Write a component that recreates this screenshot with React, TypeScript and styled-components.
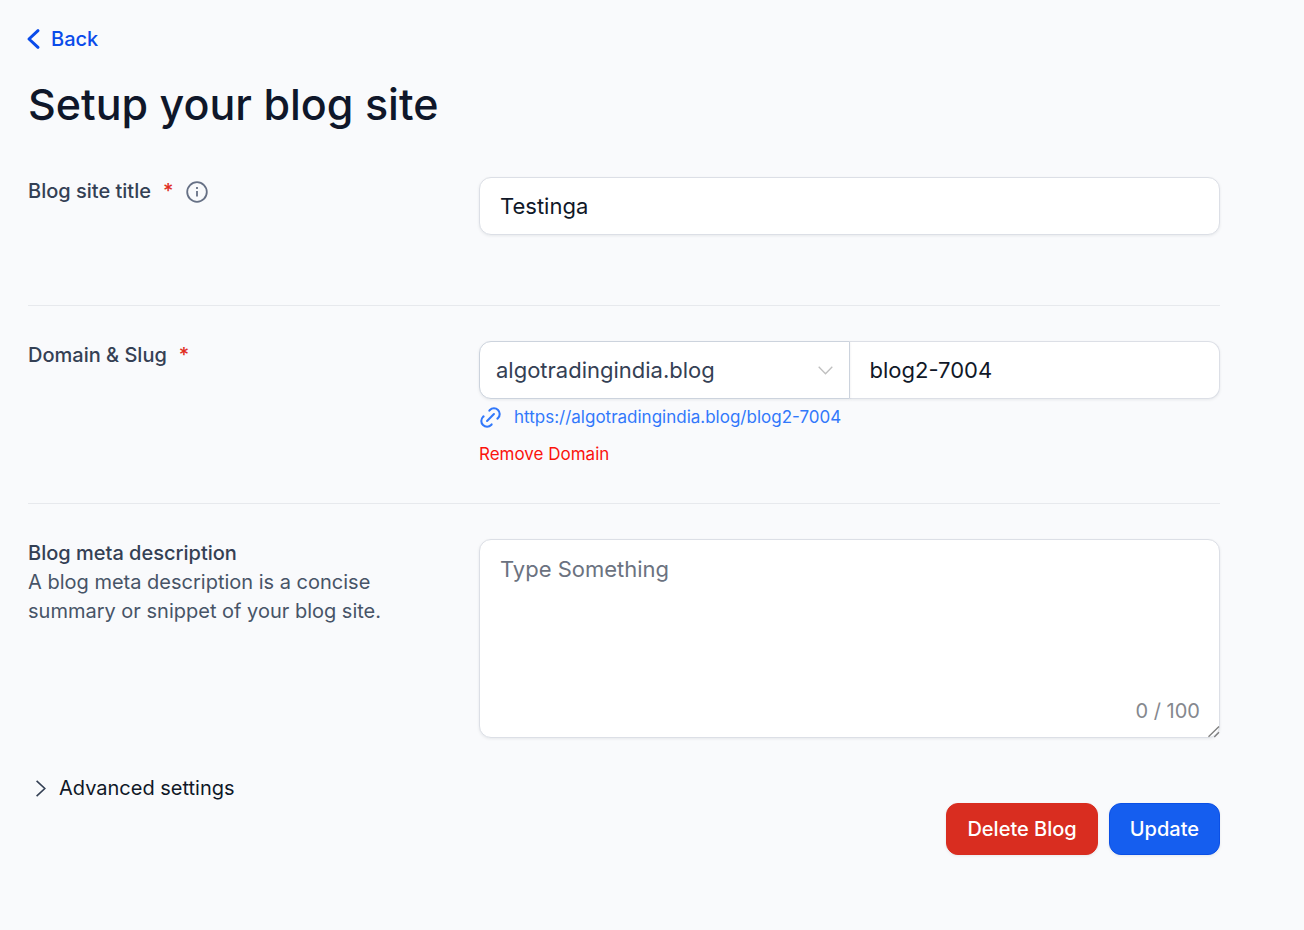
import { useId, useState } from "react";
import styled, { createGlobalStyle, css } from "styled-components";

const GlobalStyle = createGlobalStyle`
  *, *::before, *::after { box-sizing: border-box; }
  body {
    margin: 0;
    background: #f9fafc;
    color: #101828;
    font-family: Inter, "Liberation Sans", sans-serif;
    font-size: 20px;
    line-height: 29px;
  }
  button, input, select, textarea { font: inherit; color: inherit; }
`;

const Page = styled.main`
  padding: 24px 84px 72px 28px;
`;

const BackLink = styled.a`
  display: flex;
  width: fit-content;
  align-items: center;
  gap: 11px;
  height: 30px;
  color: #0a4bea;
  font-weight: 500;
  text-decoration: none;
  svg { overflow: visible; }
`;

const Title = styled.h1`
  margin: 22px 0 45px;
  font-size: 43px;
  line-height: 56px;
  font-weight: 500;
  color: #0f172a;
`;

const Row = styled.section<{ $last?: boolean; $roomy?: boolean }>`
  display: grid;
  grid-template-columns: minmax(0, 416px) minmax(0, 1fr);
  column-gap: 35px;
  padding-bottom: ${(p) => (p.$roomy ? 70 : 34)}px;
  ${(p) =>
    !p.$last &&
    css`
      border-bottom: 1px solid #e7e9ed;
      margin-bottom: 35px;
    `}
`;

const LabelLine = styled.div`
  display: flex;
  align-items: center;
  font-weight: 500;
  color: #344054;
`;

const Required = styled.span`
  margin-left: 12px;
  color: #e02d1f;
`;

const InfoButton = styled.button`
  display: inline-flex;
  margin-left: 12px;
  padding: 0;
  border: 0;
  background: none;
  color: #667085;
`;

const Hint = styled.p`
  margin: 0;
  color: #475467;
`;

const controlStyle = css`
  width: 100%;
  border: 1px solid #dcdfe6;
  border-radius: 12px;
  background: #fff;
  box-shadow: 0 1px 3px rgba(16, 24, 40, 0.08);
  font-size: 22px;
  outline: none;
`;

const TextInput = styled.input<{ $attached?: boolean }>`
  ${controlStyle}
  height: 58px;
  padding: 0 20px;
  ${(p) =>
    p.$attached &&
    css`
      border-left: 0;
      border-radius: 0 12px 12px 0;
    `}
`;

const InputPair = styled.div`
  display: grid;
  grid-template-columns: 1fr 1fr;
`;

const SelectWrap = styled.div`
  position: relative;
`;

const Select = styled.select`
  ${controlStyle}
  appearance: none;
  height: 58px;
  padding: 0 48px 0 16px;
  border-color: #ccd3dd;
  border-radius: 12px 0 0 12px;
  color: #344054;
`;

const SelectArrow = styled.svg`
  position: absolute;
  right: 17px;
  top: 25px;
  pointer-events: none;
`;

const SiteLink = styled.a`
  display: flex;
  align-items: center;
  gap: 12px;
  margin-top: 4px;
  color: #3178fb;
  font-size: 17px;
  text-decoration: none;
`;

const RemoveButton = styled.button`
  display: block;
  margin-top: 8px;
  padding: 0;
  border: 0;
  background: none;
  color: #fb130d;
  font-size: 17px;
`;

const AreaWrap = styled.div`
  position: relative;
  display: flex;
`;

const TextArea = styled.textarea`
  ${controlStyle}
  height: 199px;
  padding: 13px 20px;
  line-height: 32px;
  resize: vertical;
  &::placeholder { color: #6b7280; opacity: 1; }
  &::-webkit-resizer { background: transparent; }
`;

const ResizeGrip = styled.svg`
  position: absolute;
  right: 0;
  bottom: 0;
  pointer-events: none;
`;

const Counter = styled.span`
  position: absolute;
  right: 20px;
  bottom: 12px;
  color: #85888e;
`;

const AdvancedToggle = styled.button`
  display: flex;
  align-items: center;
  gap: 8px;
  margin-top: 2px;
  padding: 0 0 0 2px;
  border: 0;
  background: none;
`;

const Actions = styled.div`
  display: flex;
  justify-content: flex-end;
  gap: 11px;
`;

const ActionButton = styled.button<{ $danger?: boolean }>`
  height: 52px;
  padding: 0 20px;
  border: 1px solid ${(p) => (p.$danger ? "#d92d20" : "#0b50e6")};
  border-radius: 12px;
  background: ${(p) => (p.$danger ? "#d92d20" : "#155eef")};
  box-shadow: 0 1px 3px rgba(16, 24, 40, 0.08);
  color: #fff;
  font-weight: 500;
`;

const META_LIMIT = 100;

export default function App() {
  const id = useId();
  const [title, setTitle] = useState("Testinga");
  const [slug, setSlug] = useState("blog2-7004");
  const [meta, setMeta] = useState("");
  const domain = "algotradingindia.blog";

  return (
    <>
      <GlobalStyle />
      <Page>
        <BackLink href="#back">
          <svg width="12" height="20" viewBox="0 0 12 20" fill="none" stroke="currentColor" strokeWidth="3" strokeLinecap="round" strokeLinejoin="round" aria-hidden>
            <path d="M10 1.700 1 10 10 18.300" />
          </svg>
          Back
        </BackLink>
        <Title>Setup your blog site</Title>

        <Row $roomy>
          <div>
            <LabelLine>
              <label htmlFor={`${id}-title`}>Blog site title</label>
              <Required>*</Required>
              <InfoButton type="button" aria-label="About the blog site title">
                <svg width="24" height="24" viewBox="0 0 24 24" fill="none" stroke="currentColor" strokeWidth="1.800" aria-hidden>
                  <circle cx="12" cy="12" r="9.800" />
                  <path d="M12 11v5.500M12 7v2" />
                </svg>
              </InfoButton>
            </LabelLine>
          </div>
          <TextInput id={`${id}-title`} value={title} onChange={(e) => setTitle(e.target.value)} />
        </Row>

        <Row>
          <div>
            <LabelLine>
              <label htmlFor={`${id}-slug`}>Domain &amp; Slug</label>
              <Required>*</Required>
            </LabelLine>
          </div>
          <div>
            <InputPair>
              <SelectWrap>
                <Select aria-label="Domain" defaultValue={domain}>
                  <option>{domain}</option>
                </Select>
                <SelectArrow width="15" height="9" viewBox="0 0 15 9" fill="none" stroke="#bfbfbf" strokeWidth="1.300" aria-hidden>
                  <path d="M.7.700 7.500 7.700 14.300.7" />
                </SelectArrow>
              </SelectWrap>
              <TextInput $attached id={`${id}-slug`} value={slug} onChange={(e) => setSlug(e.target.value)} />
            </InputPair>
            <SiteLink href="#site">
              <svg width="23" height="23" viewBox="2 2 20 20" fill="none" stroke="currentColor" strokeWidth="1.800" strokeLinecap="round" strokeLinejoin="round" aria-hidden>
                <path d="M9 15l6-6M11 6l.463-.536a5 5 0 0 1 7.071 7.072L18 13M13 18l-.397.534a5.068 5.068 0 0 1-7.127 0 4.972 4.972 0 0 1 0-7.071L6 11" />
              </svg>
              https://{domain}/{slug}
            </SiteLink>
            <RemoveButton type="button">Remove Domain</RemoveButton>
          </div>
        </Row>

        <Row $last>
          <div>
            <LabelLine>
              <label htmlFor={`${id}-meta`}>Blog meta description</label>
            </LabelLine>
            <Hint>A blog meta description is a concise summary or snippet of your blog site.</Hint>
          </div>
          <AreaWrap>
            <TextArea
              id={`${id}-meta`}
              placeholder="Type Something"
              maxLength={META_LIMIT}
              value={meta}
              onChange={(e) => setMeta(e.target.value)}
            />
            <Counter>{`${meta.length} / ${META_LIMIT}`}</Counter>
            <ResizeGrip width="13" height="13" viewBox="0 0 13 13" fill="none" stroke="#7d7d7d" strokeWidth="1.300" aria-hidden>
              <path d="M1.500 11.800 12 1.500M7.300 12 12 7.300" />
            </ResizeGrip>
          </AreaWrap>
        </Row>

        <AdvancedToggle type="button" aria-expanded={false}>
          <svg width="21" height="21" viewBox="0 0 21 21" fill="none" stroke="#344054" strokeWidth="1.600" aria-hidden>
            <path d="m6.600 2.800 8.200 7.700-8.200 7.700" />
          </svg>
          Advanced settings
        </AdvancedToggle>

        <Actions>
          <ActionButton type="button" $danger>Delete Blog</ActionButton>
          <ActionButton type="button">Update</ActionButton>
        </Actions>
      </Page>
    </>
  );
}
